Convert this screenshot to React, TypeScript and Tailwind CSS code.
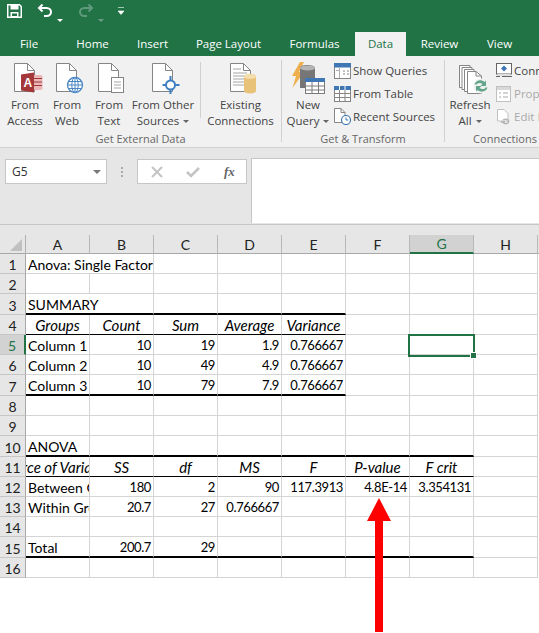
import React from "react";

const UI = { fontFamily: '"Open Sans", "Noto Sans", sans-serif' };
const CELL = { fontFamily: 'Lato, "Liberation Sans", sans-serif' };

function Page({ lines = false }: { lines?: boolean }) {
  return (
    <g>
      <path d="M1.500 1.500H14.500L21.500 8.500V29.500H1.500Z" fill="#fff" stroke="#858585" />
      <path d="M14.500 1.500V8.500H21.500" fill="none" stroke="#858585" />
      {lines && (
        <path d="M4 7H12M4 11H18M4 14H18M4 17H15M4 20H15M4 23H15" stroke="#a5a5a5" fill="none" />
      )}
    </g>
  );
}

const AccessIcon = () => (
  <svg width="30" height="32" viewBox="0 0 30 32">
    <Page />
    <path d="M19 13h8c2 0 2.500 1 2.500 1v13s-.5 1-2.500 1h-8z" fill="#e9b7b7" />
    <path d="M20 16.500h9M20 20h9M20 23.500h9" stroke="#a4373a" />
    <path d="M8 12.500l13-2v20l-13-2z" fill="#a4373a" />
    <text x="10.500" y="24.500" fontSize="12" fontWeight="700" fill="#fff" style={{ fontFamily: '"Liberation Sans", sans-serif' }}>A</text>
  </svg>
);
const WebIcon = () => (
  <svg width="30" height="32" viewBox="0 0 30 32">
    <Page />
    <circle cx="20" cy="23" r="7.500" fill="#fff" stroke="#4a86c5" strokeWidth="1.300" />
    <ellipse cx="20" cy="23" rx="3.200" ry="7.500" fill="none" stroke="#4a86c5" />
    <path d="M12.500 23h15M13.500 19.500h13M13.500 26.500h13M20 15.500v15" stroke="#4a86c5" fill="none" />
  </svg>
);
const TextIcon = () => (
  <svg width="30" height="32" viewBox="0 0 30 32">
    <Page />
    <rect x="14.500" y="15.500" width="12" height="15" fill="#fff" stroke="#858585" />
    <path d="M17 20h7M17 23h7M17 26h7" stroke="#a5a5a5" />
  </svg>
);
const OtherIcon = () => (
  <svg width="30" height="32" viewBox="0 0 30 32">
    <Page />
    <path d="M19.500 14v5M19.500 27v5M11.500 23h4M23.500 23h5" stroke="#3d7fc0" strokeWidth="2" />
    <circle cx="19.500" cy="23" r="4.500" fill="#fff" stroke="#3d7fc0" strokeWidth="2" />
  </svg>
);
const ExistingIcon = () => (
  <svg width="30" height="32" viewBox="0 0 30 32">
    <Page lines />
    <path d="M15 14.500c0-1.500 2.500-2.500 6-2.500s6 1 6 2.500V29c0 1.500-2.500 2.500-6 2.500S15 30.500 15 29z" fill="#e9c27a" />
    <ellipse cx="21" cy="14.500" rx="6" ry="2.300" fill="#f6dfae" />
  </svg>
);
const QueryIcon = () => (
  <svg width="34" height="33" viewBox="0 0 34 33">
    <path d="M9 1 1 15h4l-3.500 12L13 11H8l5-10z" fill="#eeb04f" />
    <path d="M9 7c0-2 3-3 7-3s8 1 8 3v20H9z" fill="#767676" />
    <ellipse cx="16.500" cy="7" rx="7.500" ry="2.600" fill="#b5b5b5" />
    <rect x="14.500" y="17.500" width="19" height="15" fill="#fff" stroke="#7a7a7a" />
    <rect x="14" y="17" width="20" height="4" fill="#3f76b4" />
    <path d="M21 21v11M27.500 21v11M15 25h18M15 29h18" stroke="#7a7a7a" />
  </svg>
);
const ShowIcon = () => (
  <svg width="17" height="16" viewBox="0 0 17 16">
    <rect x=".5" y=".5" width="16" height="15" fill="#fff" stroke="#858585" />
    <rect y="0" width="17" height="4.500" fill="#3f76b4" />
    <path d="M5.500 7.500H2M5.500 4.500V15" stroke="#b0b0b0" fill="none" />
    <path d="M9 8h2M13 8h2M9 11h2M13 11h2" stroke="#858585" />
  </svg>
);
const TableIcon = () => (
  <svg width="17" height="16" viewBox="0 0 17 16">
    <rect x=".5" y=".5" width="16" height="15" fill="#fff" stroke="#858585" />
    <rect y="0" width="17" height="4" fill="#3f76b4" />
    <path d="M5.500 4v11M11 4v11M1 7.500h15M1 11.500h15" stroke="#858585" />
    <path d="M5.500 0v4M11 0v4" stroke="#fff" />
  </svg>
);
const RecentIcon = () => (
  <svg width="17" height="17" viewBox="0 0 17 17">
    <path d="M.5.500H7L11 4.500V14.500H.5Z" fill="#fff" stroke="#858585" />
    <path d="M7 .5v4h4" fill="none" stroke="#858585" />
    <circle cx="12" cy="12" r="4.500" fill="#fff" stroke="#3f76b4" strokeWidth="1.200" />
    <path d="M12 9.500V12h2.300" fill="none" stroke="#3f76b4" />
  </svg>
);
const RefreshIcon = () => (
  <svg width="31" height="30" viewBox="0 0 31 30">
    <path d="M1.500 1.500H12v22H1.500Z" fill="#fff" stroke="#858585" />
    <path d="M4 3.500H14v22H4Z" fill="#fff" stroke="#858585" />
    <path d="M6.500 5.500H16v22H6.500Z" fill="#fff" stroke="#858585" />
    <path d="M9.500 7.500H18L23.500 12V29.500H9.500Z" fill="#fff" stroke="#858585" />
    <path d="M18 7.500V12H23.500" fill="none" stroke="#858585" />
    <circle cx="23" cy="22" r="7.500" fill="#f1f1f1" />
    <path d="M16.500 20.500c1-3.500 6-6 10-2.500l1.500-1.500v5.500h-5.500l2-2c-2.500-2-5.500-1-6 .5z" fill="#62a58b" />
    <path d="M29.500 23.500c-1 3.500-6 6-10 2.500L18 27.500V22h5.500l-2 2c2.500 2 5.500 1 6-.5z" fill="#62a58b" />
  </svg>
);
const ConnIcon = () => (
  <svg width="16" height="15" viewBox="0 0 16 15">
    <rect x=".5" y=".5" width="15" height="10.500" fill="#fff" stroke="#666" />
    <path d="M8 2.500 11 5.500 8 8.500 5 5.500Z" fill="#3f76b4" />
    <path d="M0 13.500h4M6 13.500h10" stroke="#666" />
    <path d="M2 11h12l1 2H1z" fill="#ddd" />
  </svg>
);
const PropIcon = () => (
  <svg width="15" height="16" viewBox="0 0 15 16">
    <rect x=".5" y=".5" width="14" height="15" fill="#fff" stroke="#c0c0c0" />
    <rect x="1" y="1" width="13" height="3" fill="#d8d8d8" />
    <path d="M3 7h2M7 7h5M3 11h2M7 11h5" stroke="#a8a8a8" />
  </svg>
);
const EditIcon = () => (
  <svg width="13" height="16" viewBox="0 0 13 16">
    <path d="M.5.500H7L11 4.500V12H.5Z" fill="#fff" stroke="#c0c0c0" />
    <path d="M4 13h4M6 11c2-1 4-1 5 0s1 3-1 3.500-4 0-4-1.500" fill="none" stroke="#b0b0b0" strokeWidth="1.300" />
  </svg>
);

function Caret({ color = "border-t-[#666]" }: { color?: string }) {
  return <span className={`inline-block ml-1 align-middle w-0 h-0 border-x-[3px] border-x-transparent border-t-[3px] ${color}`} />;
}

function Big({ icon, l1, l2, w, caret, shift }: { icon: React.ReactNode; l1: string; l2: string; w: string; caret?: boolean; shift?: boolean }) {
  return (
    <div className={`flex flex-col items-center shrink-0 ${w}`}>
      <div className={`h-[34px] flex items-end justify-center ${shift ? "ml-[6px]" : ""}`}>{icon}</div>
      <div className="mt-[3px] text-center text-[11.500px] leading-[16px] text-[#444] whitespace-nowrap">
        <div>{l1}</div>
        <div>{l2}{caret && <Caret />}</div>
      </div>
    </div>
  );
}

function Small({ icon, label, dim }: { icon: React.ReactNode; label: string; dim?: boolean }) {
  return (
    <div className={`flex items-center h-[23px] gap-[2px] text-[11.500px] whitespace-nowrap ${dim ? "text-[#aaa]" : "text-[#444]"}`}>
      <div className="w-[17px] flex justify-center shrink-0">{icon}</div>
      <span>{label}</span>
    </div>
  );
}

function Group({ label, w, children }: { label: string; w: string; children: React.ReactNode }) {
  return (
    <div className={`shrink-0 flex flex-col h-full ${w}`}>
      <div className="flex h-[76px] pt-[4px]">{children}</div>
      <div className="pt-[2px] text-center text-[11px] leading-[16px] text-[#666] whitespace-nowrap">{label}</div>
    </div>
  );
}

const Sep = () => <div className="w-px h-[82px] mt-[4px] bg-[#d0d0d0] shrink-0" />;

function Tab({ t, w, active }: { t: string; w: string; active?: boolean }) {
  return (
    <div className={`${w} h-[24px] shrink-0 flex items-center justify-center text-[11.500px] ${active ? "bg-[#f1f1f1] text-[#217346]" : "text-white"}`}>
      {t}
    </div>
  );
}

type C = { t?: string; a?: "l" | "r" | "c"; i?: boolean; b?: "thick" | "thin"; span?: number };

const T = (t: string): C => ({ t, a: "r" });
const H = (t: string): C => ({ t, a: "c", i: true });
const L = (t: string): C => ({ t, a: "l" });

const rows: C[][] = [
  [{ ...L("Anova: Single Factor"), span: 2 }, {}, {}, {}, {}, {}, {}],
  [{}, {}, {}, {}, {}, {}, {}, {}],
  [{ ...L("SUMMARY"), span: 2, b: "thick" }, { b: "thick" }, { b: "thick" }, { b: "thick" }, {}, {}, {}],
  [H("Groups"), H("Count"), H("Sum"), H("Average"), H("Variance"), {}, {}, {}].map((c, i) => (i < 5 ? { ...c, b: "thin" as const } : c)),
  [L("Column 1"), T("10"), T("19"), T("1.9"), T("0.766667"), {}, {}, {}],
  [L("Column 2"), T("10"), T("49"), T("4.9"), T("0.766667"), {}, {}, {}],
  [L("Column 3"), T("10"), T("79"), T("7.9"), T("0.766667"), {}, {}, {}].map((c, i) => (i < 5 ? { ...c, b: "thick" as const } : c)),
  [{}, {}, {}, {}, {}, {}, {}, {}],
  [{}, {}, {}, {}, {}, {}, {}, {}],
  [L("ANOVA"), {}, {}, {}, {}, {}, {}, {}].map((c, i) => (i < 7 ? { ...c, b: "thick" as const } : c)),
  [H("Source of Variation"), H("SS"), H("df"), H("MS"), H("F"), H("P-value"), H("F crit"), {}].map((c, i) => (i < 7 ? { ...c, b: "thin" as const } : c)),
  [L("Between Groups"), T("180"), T("2"), T("90"), T("117.3913"), T("4.8E-14"), T("3.354131"), {}],
  [L("Within Groups"), T("20.7"), T("27"), T("0.766667"), {}, {}, {}, {}],
  [{}, {}, {}, {}, {}, {}, {}, {}],
  [L("Total"), T("200.7"), T("29"), {}, {}, {}, {}, {}].map((c, i) => (i < 7 ? { ...c, b: "thick" as const } : c)),
  [{}, {}, {}, {}, {}, {}, {}, {}],
];

function Cell({ c }: { c: C }) {
  const align = c.a === "r" ? "justify-end pr-[2px] text-[13px] tracking-[-0.4px]" : c.a === "c" ? "justify-center text-[15px] italic" : "justify-start pl-[2px] text-[14px]";
  const bottom = c.b === "thick" ? "border-b-2 border-b-black" : c.b === "thin" ? "border-b border-b-black" : "border-b border-b-[#d4d4d4]";
  const span = c.span === 2 ? "col-span-2" : "";
  return (
    <div className={`flex items-center pt-[2px] overflow-hidden whitespace-nowrap border-r border-r-[#d4d4d4] text-black min-w-0 ${align} ${bottom} ${span}`}>
      {c.t && <span className="shrink-0">{c.t}</span>}
    </div>
  );
}

export default function App() {
  return (
    <div className="relative w-[539px] h-[633px] overflow-hidden bg-white" style={UI}>
      {/* Title bar */}
      <div className="h-[32px] bg-[#217346] flex items-start pl-[7px] pt-[4px]">
        <svg width="15" height="14" viewBox="0 0 15 14">
          <path d="M.75.75H12.500L14.250 2.500V13.250H.75Z" fill="none" stroke="#fff" strokeWidth="1.500" />
          <rect x="3.500" y="1" width="8" height="4.500" fill="#fff" />
          <rect x="3.500" y="8" width="8" height="5.500" fill="#fff" />
          <rect x="5" y="9.500" width="5" height="2.500" fill="#217346" />
        </svg>
        <svg className="ml-[15px]" width="16" height="13" viewBox="0 0 16 13">
          <path d="M2 4h7.500c6 0 6 8 0 8H7M5.500.5 2 4 5.500 7.500" fill="none" stroke="#fff" strokeWidth="2" />
        </svg>
        <span className="mt-[3px]"><Caret color="border-t-[#fff]" /></span>
        <svg className="ml-[15px]" width="16" height="13" viewBox="0 0 16 13">
          <path d="M14 4H6.500c-6 0-6 8 0 8H9M10.500.5 14 4 10.500 7.500" fill="none" stroke="#5f9a7c" strokeWidth="2" />
        </svg>
        <span className="mt-[3px]"><Caret color="border-t-[#6f9c84]" /></span>
        <svg className="ml-[14px] mt-[3px]" width="6" height="8" viewBox="0 0 6 8">
          <path d="M0 .5h6M0 4h6L3 7.500z" fill="#fff" stroke="#fff" strokeWidth=".600" />
        </svg>
      </div>
      {/* Tabs */}
      <div className="h-[24px] bg-[#217346] flex">
        <Tab t="File" w="w-[58px]" />
        <Tab t="Home" w="w-[69px]" />
        <Tab t="Insert" w="w-[51px]" />
        <Tab t="Page Layout" w="w-[101px]" />
        <Tab t="Formulas" w="w-[71px]" />
        <div className="w-[5px] shrink-0" />
        <Tab t="Data" w="w-[51px]" active />
        <Tab t="Review" w="w-[67px]" />
        <Tab t="View" w="w-[53px]" />
      </div>
      {/* Ribbon */}
      <div className="h-[92px] bg-[#f1f1f1] border-b border-b-[#d2d2d2] flex overflow-hidden">
        <Group label="Get External Data" w="w-[281px]">
          <div className="w-[4px]" />
          <Big icon={<AccessIcon />} l1="From" l2="Access" w="w-[42px]" shift />
          <Big icon={<WebIcon />} l1="From" l2="Web" w="w-[42px]" shift />
          <Big icon={<TextIcon />} l1="From" l2="Text" w="w-[42px]" shift />
          <Big icon={<OtherIcon />} l1="From Other" l2="Sources" w="w-[66px]" caret shift />
          <div className="w-[4px]" />
          <div className="w-px h-[56px] bg-[#d0d0d0] mt-[2px]" />
          <Big icon={<ExistingIcon />} l1="Existing" l2="Connections" w="w-[79px]" shift />
        </Group>
        <Sep />
        <Group label="Get & Transform" w="w-[162px]">
          <Big icon={<QueryIcon />} l1="New" l2="Query" w="w-[52px]" caret />
          <div className="flex flex-col -mt-px">
            <Small icon={<ShowIcon />} label="Show Queries" />
            <Small icon={<TableIcon />} label="From Table" />
            <Small icon={<RecentIcon />} label="Recent Sources" />
          </div>
        </Group>
        <Sep />
        <Group label="Connections" w="w-[120px]">
          <Big icon={<RefreshIcon />} l1="Refresh" l2="All" w="w-[50px]" caret shift />
          <div className="flex flex-col -mt-px">
            <Small icon={<ConnIcon />} label="Connections" />
            <Small icon={<PropIcon />} label="Properties" dim />
            <Small icon={<EditIcon />} label="Edit Links" dim />
          </div>
        </Group>
      </div>
      {/* Formula bar */}
      <div className="h-[87px] bg-[#e6e6e6]">
        <div className="flex pt-[11px] pl-[5px] items-start h-[77px] border-b border-b-[#c6c6c6]">
          <div className="w-[102px] h-[25px] bg-white border border-[#c6c6c6] flex items-center justify-between pl-[6px] pr-[5px] text-[12px] text-[#333]">
            <span>G5</span>
            <span className="w-0 h-0 border-x-[4px] border-x-transparent border-t-[4px] border-t-[#777]" />
          </div>
          <div className="w-[30px] h-[25px] flex flex-col items-center justify-center gap-[2px]">
            <span className="w-[2px] h-[2px] bg-[#aaa]" />
            <span className="w-[2px] h-[2px] bg-[#aaa]" />
            <span className="w-[2px] h-[2px] bg-[#aaa]" />
          </div>
          <div className="w-[110px] h-[25px] bg-white border border-[#c6c6c6] flex items-center">
            <svg className="ml-[13px]" width="12" height="12" viewBox="0 0 12 12">
              <path d="M1 1 11 11M11 1 1 11" stroke="#c4c4c4" strokeWidth="2" />
            </svg>
            <svg className="ml-[23px]" width="14" height="12" viewBox="0 0 14 12">
              <path d="M1 6 5 10 13 2" fill="none" stroke="#c4c4c4" strokeWidth="2.500" />
            </svg>
            <span className="ml-[24px] text-[13px] italic font-bold text-[#666]" style={{ fontFamily: '"Liberation Serif", serif' }}>fx</span>
          </div>
          <div className="ml-[4px] flex-1 h-[65px] -mt-[1px] bg-white border-l border-t border-[#c6c6c6]" />
        </div>
      </div>
      {/* Sheet */}
      <div className="grid grid-cols-[26px_repeat(8,64px)_1fr] grid-rows-[19px_20px_20px_21px_20px_20px_20px_21px_20px_20px_21px_20px_20px_20px_20px_21px_20px] bg-white" style={CELL}>
        <div className="bg-[#e6e6e6] border-r border-r-[#b0b0b0] border-b border-b-[#a8a8a8] relative">
          <span className="absolute right-[3px] bottom-[2px] w-0 h-0 border-l-[12px] border-l-transparent border-b-[12px] border-b-[#c0c0c0]" />
        </div>
        {["A", "B", "C", "D", "E", "F", "G", "H"].map((h) => (
          <div
            key={h}
            className={`flex items-center justify-center text-[14px] ${h === "G" ? "bg-[#d2d2d2] text-[#217346] border-b-2 border-b-[#217346]" : "bg-[#e6e6e6] text-[#222] border-b border-b-[#a8a8a8]"} border-r border-r-[#b8b8b8]`}
          >
            {h}
          </div>
        ))}
        <div className="bg-[#e6e6e6] border-b border-b-[#a8a8a8]" />
        {rows.map((r, i) => (
          <React.Fragment key={i}>
            <div className={`flex items-center justify-center pt-[2px] text-[14px] border-b border-b-[#c6c6c6] ${i === 4 ? "bg-[#d2d2d2] text-[#217346] border-r-2 border-r-[#217346]" : "bg-[#e6e6e6] text-[#222] border-r border-r-[#a8a8a8]"}`}>
              {i + 1}
            </div>
            {r.map((c, j) => (
              <Cell key={j} c={c} />
            ))}
            <div />
          </React.Fragment>
        ))}
      </div>
      {/* Selection */}
      <div className="absolute left-[408px] top-[334px] w-[67px] h-[23px] border-2 border-[#217346]">
        <span className="absolute right-[-4px] bottom-[-4px] w-[5px] h-[5px] bg-[#217346] border border-white box-content" />
      </div>
      {/* Arrow */}
      <svg className="absolute left-[360px] top-[495px]" width="40" height="138" viewBox="0 0 40 138">
        <path d="M19 3 31 26H23V137H15V26H7Z" fill="#ff0000" />
      </svg>
    </div>
  );
}
